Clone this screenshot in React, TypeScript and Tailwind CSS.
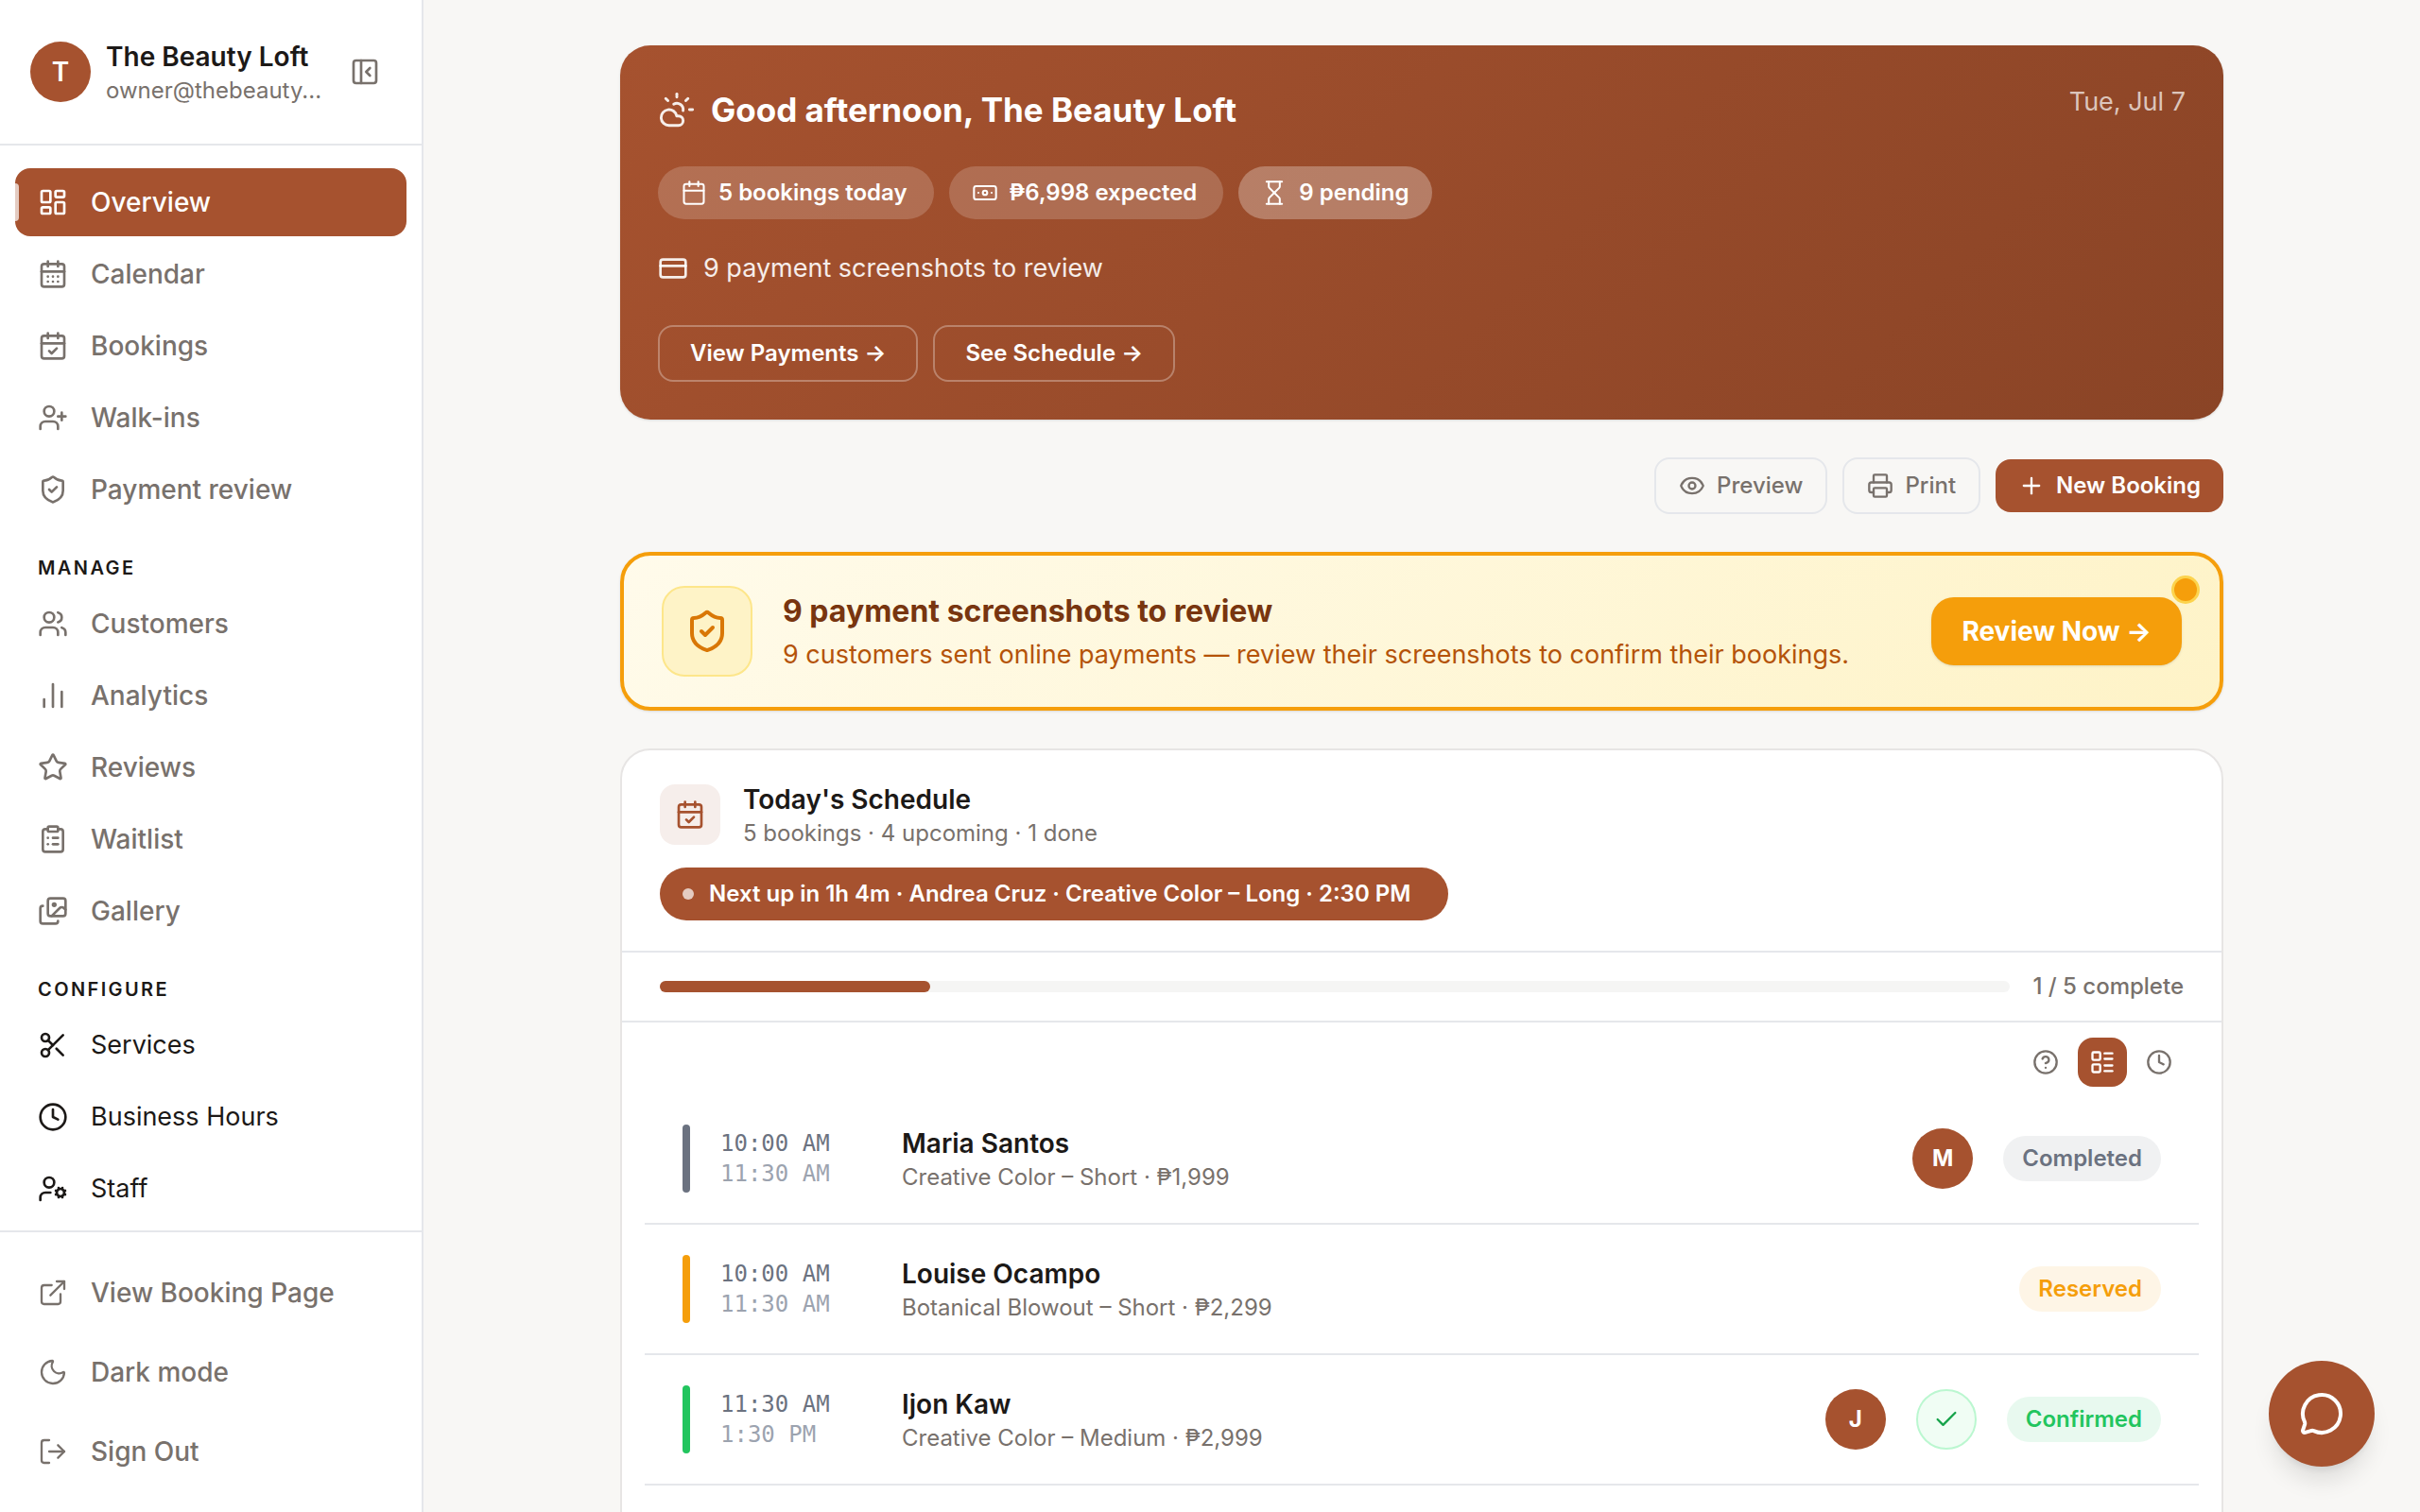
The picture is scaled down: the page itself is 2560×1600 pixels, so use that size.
import {
  Banknote,
  Calendar,
  CalendarCheck,
  CalendarDays,
  ChartNoAxesColumn,
  Check,
  CircleQuestionMark,
  ClipboardList,
  Clock,
  CloudSun,
  CreditCard,
  ExternalLink,
  Eye,
  Hourglass,
  Images,
  LayoutDashboard,
  LayoutList,
  LogOut,
  MessageCircle,
  Moon,
  PanelLeftClose,
  Plus,
  Printer,
  Scissors,
  ShieldCheck,
  Star,
  UserCog,
  UserPlus,
  Users,
  type LucideIcon,
} from "lucide-react";

type NavItemType = {
  label: string;
  icon: LucideIcon;
  active?: boolean;
};

type BookingType = {
  start: string;
  end: string;
  name: string;
  service: string;
  initial?: string;
  canConfirm?: boolean;
  status: string;
  bar: string;
  badge: string;
};

const mainNav: NavItemType[] = [
  { label: "Overview", icon: LayoutDashboard, active: true },
  { label: "Calendar", icon: CalendarDays },
  { label: "Bookings", icon: CalendarCheck },
  { label: "Walk-ins", icon: UserPlus },
  { label: "Payment review", icon: ShieldCheck },
];

const manageNav: NavItemType[] = [
  { label: "Customers", icon: Users },
  { label: "Analytics", icon: ChartNoAxesColumn },
  { label: "Reviews", icon: Star },
  { label: "Waitlist", icon: ClipboardList },
  { label: "Gallery", icon: Images },
];

const configureNav: NavItemType[] = [
  { label: "Services", icon: Scissors },
  { label: "Business Hours", icon: Clock },
  { label: "Staff", icon: UserCog },
];

const footerNav: NavItemType[] = [
  { label: "View Booking Page", icon: ExternalLink },
  { label: "Dark mode", icon: Moon },
  { label: "Sign Out", icon: LogOut },
];

const bookings: BookingType[] = [
  {
    start: "10:00 AM",
    end: "11:30 AM",
    name: "Maria Santos",
    service: "Creative Color – Short · ₱1,999",
    initial: "M",
    status: "Completed",
    bar: "bg-[#6b7280]",
    badge: "bg-[#6b7280]/10 text-[#6b7280]",
  },
  {
    start: "10:00 AM",
    end: "11:30 AM",
    name: "Louise Ocampo",
    service: "Botanical Blowout – Short · ₱2,299",
    status: "Reserved",
    bar: "bg-[#f59e0b]",
    badge: "bg-[#f59e0b]/10 text-[#f59e0b]",
  },
  {
    start: "11:30 AM",
    end: "1:30 PM",
    name: "Ijon Kaw",
    service: "Creative Color – Medium · ₱2,999",
    initial: "J",
    canConfirm: true,
    status: "Confirmed",
    bar: "bg-[#22c55e]",
    badge: "bg-[#22c55e]/10 text-[#22c55e]",
  },
];

const NavItem = ({ item, tone }: { item: NavItemType; tone: string }) => {
  const Icon = item.icon;
  return (
    <a
      href="#"
      className={`relative flex h-[72px] shrink-0 items-center gap-6 overflow-hidden rounded-2xl px-6 ${
        item.active ? "bg-[#a6522f] text-[28px] font-medium text-white" : tone
      }`}
    >
      {item.active && <span className="absolute left-0 top-4 h-10 w-1 rounded-r bg-white/70" />}
      <Icon size={32} className="shrink-0" />
      {item.label}
    </a>
  );
};

const NavHeading = ({ children }: { children: string }) => (
  <h2 className="px-6 pt-8 pb-2 text-[20px] leading-[30px] font-semibold tracking-[0.12em] text-[#1c1917]">{children}</h2>
);

const Sidebar = () => (
  <aside className="sticky top-0 flex h-screen w-[448px] shrink-0 flex-col border-r-2 border-[#e5e7eb] bg-white">
    {/* account */}
    <div className="flex h-[154px] shrink-0 items-center border-b-2 border-[#e5e7eb] pr-11 pl-8">
      <div className="flex size-16 shrink-0 items-center justify-center rounded-full bg-[#a6522f] text-[28px] font-semibold text-white">
        T
      </div>
      <div className="ml-4 min-w-0 flex-1 pt-1">
        <p className="text-[28px] leading-9 font-semibold whitespace-nowrap text-[#1c1917]">The Beauty Loft</p>
        <p className="text-[24px] leading-9 whitespace-nowrap text-[#78716c]">owner@thebeauty...</p>
      </div>
      <button type="button" aria-label="Collapse sidebar" className="text-[#78716c]">
        <PanelLeftClose size={32} />
      </button>
    </div>
    {/* links */}
    <nav className="flex min-h-0 flex-1 flex-col overflow-hidden px-4 pt-6">
      <div className="flex flex-col gap-1">
        {mainNav.map((item) => (
          <NavItem key={item.label} item={item} tone="text-[28px] font-medium text-[#78716c]" />
        ))}
      </div>
      <NavHeading>MANAGE</NavHeading>
      <div className="flex flex-col gap-1">
        {manageNav.map((item) => (
          <NavItem key={item.label} item={item} tone="text-[28px] font-medium text-[#78716c]" />
        ))}
      </div>
      <NavHeading>CONFIGURE</NavHeading>
      <div className="flex flex-col gap-1">
        {configureNav.map((item) => (
          <NavItem key={item.label} item={item} tone="text-[27px] text-[#1c1917]" />
        ))}
      </div>
    </nav>
    {/* footer */}
    <div className="flex shrink-0 flex-col gap-1 border-t-2 border-[#e5e7eb] px-4 py-6">
      {footerNav.map(({ label, icon: Icon }) => (
        <button
          key={label}
          type="button"
          className="flex h-20 items-center gap-6 px-6 text-[28px] font-medium text-[#78716c]"
        >
          <Icon size={32} strokeWidth={1.75} />
          {label}
        </button>
      ))}
    </div>
  </aside>
);

const Hero = () => (
  <section className="rounded-[32px] bg-[linear-gradient(135deg,#a6522f,#8a4426)] p-10 text-white shadow-sm">
    <div className="flex items-start justify-between">
      <h1 className="flex items-center gap-4 text-[35px] leading-[56px] font-bold">
        <CloudSun size={40} strokeWidth={1.75} className="opacity-90" />
        Good afternoon, The Beauty Loft
      </h1>
      <p className="text-[27px] leading-10 text-white/70">Tue, Jul 7</p>
    </div>
    {/* stats */}
    <div className="mt-8 flex gap-4 text-[24px] font-semibold">
      <span className="flex h-14 items-center gap-3 rounded-full bg-white/18 pr-7 pl-6">
        <Calendar size={28} strokeWidth={1.75} />
        5 bookings today
      </span>
      <span className="flex h-14 items-center gap-3 rounded-full bg-white/18 pr-7 pl-6">
        <Banknote size={28} strokeWidth={1.75} />
        ₱6,998 expected
      </span>
      <span className="flex h-14 items-center gap-3 rounded-full bg-white/28 px-6">
        <Hourglass size={28} strokeWidth={1.75} />
        9 pending
      </span>
    </div>
    <p className="mt-8 flex items-center gap-4 text-[27px] leading-10 text-white/90">
      <CreditCard size={32} />9 payment screenshots to review
    </p>
    {/* actions */}
    <div className="mt-10 flex gap-4 text-[24px] font-semibold">
      <button type="button" className="h-[60px] rounded-2xl border-2 border-white/30 px-8">
        View Payments →
      </button>
      <button type="button" className="h-[60px] rounded-2xl border-2 border-white/30 px-8">
        See Schedule →
      </button>
    </div>
  </section>
);

const Toolbar = () => (
  <div className="mt-10 flex items-center justify-end gap-4 text-[24px]">
    <button
      type="button"
      className="flex h-[60px] items-center gap-3 rounded-2xl border-2 border-[#e5e7eb] px-6 font-medium text-[#78716c]"
    >
      <Eye size={28} />
      Preview
    </button>
    <button
      type="button"
      className="flex h-[60px] items-center gap-3 rounded-2xl border-2 border-[#e5e7eb] px-6 font-medium text-[#78716c]"
    >
      <Printer size={28} />
      Print
    </button>
    <button type="button" className="flex h-14 items-center gap-3 rounded-2xl bg-[#a6522f] px-6 font-semibold text-white">
      <Plus size={28} />
      New Booking
    </button>
  </div>
);

const PaymentAlert = () => (
  <section className="relative mt-10 flex items-center gap-8 rounded-[32px] border-4 border-[#f59e0b] bg-[linear-gradient(135deg,#fffbeb,#fef3c7)] px-10 py-8 shadow-sm">
    <div className="flex size-24 shrink-0 items-center justify-center rounded-3xl border-2 border-[#fde68a] bg-[#fef3c7] text-[#d97706]">
      <ShieldCheck size={48} />
    </div>
    <div className="flex-1 pt-1">
      <h2 className="text-[32px] leading-[46px] font-bold text-[#78350f]">9 payment screenshots to review</h2>
      <p className="text-[27px] leading-[46px] text-[#b45309]">
        9 customers sent online payments — review their screenshots to confirm their bookings.
      </p>
    </div>
    <button type="button" className="h-[72px] rounded-3xl bg-[#f59e0b] px-8 text-[28px] font-bold text-white shadow-sm">
      Review Now →
    </button>
    {/* unread dot */}
    <span className="absolute top-6 right-6 size-6 rounded-full bg-[#f59e0b] ring-3 ring-[#fcd34d]" />
  </section>
);

const Avatar = ({ initial }: { initial: string }) => (
  <span className="flex size-16 items-center justify-center rounded-full bg-[#a6522f] text-[24px] font-bold text-white">
    {initial}
  </span>
);

const BookingRow = ({ booking }: { booking: BookingType }) => (
  <li className="flex items-center gap-8 border-b-2 border-[#e5e7eb] px-10 py-8">
    <span className={`h-[72px] w-2 rounded-full ${booking.bar}`} />
    <div className="w-40 font-['DejaVu_Sans_Mono',monospace] text-[24px] leading-8">
      <p className="text-[#6b7280]">{booking.start}</p>
      <p className="text-[#9ca3af]">{booking.end}</p>
    </div>
    <div className="-mb-1 flex-1">
      <p className="text-[28px] leading-9 font-semibold text-[#1c1917]">{booking.name}</p>
      <p className="text-[24px] leading-9 text-[#78716c]">{booking.service}</p>
    </div>
    {booking.initial && <Avatar initial={booking.initial} />}
    {booking.canConfirm && (
      <button
        type="button"
        aria-label="Mark as done"
        className="flex size-16 items-center justify-center rounded-full border-2 border-[#bbf7d0] bg-[#f0fdf4] text-[#16a34a]"
      >
        <Check size={28} />
      </button>
    )}
    <span className={`flex h-12 items-center rounded-full px-5 text-[24px] font-semibold ${booking.badge}`}>
      {booking.status}
    </span>
  </li>
);

const Schedule = () => {
  const done = 1;
  const total = 5;
  return (
    <section className="mt-10 overflow-hidden rounded-[32px] border-2 border-[#e7e5e4] bg-white">
      {/* header */}
      <div className="border-b-2 border-[#e5e7eb] px-10 pt-9 pb-8">
        <div className="flex h-16 items-center gap-6">
          <div className="flex size-16 items-center justify-center rounded-2xl bg-[#f6eeeb] text-[#a6522f]">
            <CalendarCheck size={32} />
          </div>
          <div className="pt-1">
            <h2 className="text-[28px] leading-9 font-semibold text-[#1c1917]">Today's Schedule</h2>
            <p className="text-[24px] leading-9 text-[#78716c]">5 bookings · 4 upcoming · 1 done</p>
          </div>
        </div>
        <div className="mt-6 flex h-14 w-fit items-center gap-4 rounded-full bg-[#a6522f] pr-10 pl-6 text-[24px] font-semibold text-white">
          <span className="size-3 rounded-full bg-white/70" />
          Next up in 1h 4m · Andrea Cruz · Creative Color – Long · 2:30 PM
        </div>
      </div>
      {/* progress */}
      <div className="flex h-[74px] items-center gap-6 border-b-2 border-[#e5e7eb] px-10">
        <div className="h-3 flex-1 rounded-full bg-[#f5f5f4]">
          <div className="h-full rounded-full bg-[#a6522f]" style={{ width: `${(done / total) * 100}%` }} />
        </div>
        <p className="text-[24px] font-medium text-[#78716c]">
          {done} / {total} complete
        </p>
      </div>
      {/* view switch */}
      <div className="flex justify-end gap-2 px-10 pt-4 pb-2 text-[#78716c]">
        <button type="button" aria-label="Help" className="flex size-[52px] items-center justify-center">
          <CircleQuestionMark size={28} />
        </button>
        <button
          type="button"
          aria-label="List view"
          className="flex size-[52px] items-center justify-center rounded-2xl bg-[#a6522f] text-white"
        >
          <LayoutList size={28} />
        </button>
        <button type="button" aria-label="Timeline view" className="flex size-[52px] items-center justify-center">
          <Clock size={28} />
        </button>
      </div>
      <ul className="px-6 pb-16">
        {bookings.map((booking) => (
          <BookingRow key={booking.name} booking={booking} />
        ))}
      </ul>
    </section>
  );
};

export default function App() {
  return (
    <div className="flex h-screen overflow-hidden bg-[#f8f7f5] font-['Inter',sans-serif]">
      <Sidebar />
      <main className="min-w-0 flex-1 overflow-hidden px-8 pt-12">
        <div className="mx-auto max-w-[1696px]">
          <Hero />
          <Toolbar />
          <PaymentAlert />
          <Schedule />
        </div>
      </main>
      {/* chat */}
      <button
        type="button"
        aria-label="Open chat"
        className="fixed right-12 bottom-12 flex size-28 items-center justify-center rounded-full bg-[#a6522f] text-white shadow-xl"
      >
        <MessageCircle size={48} />
      </button>
    </div>
  );
}
